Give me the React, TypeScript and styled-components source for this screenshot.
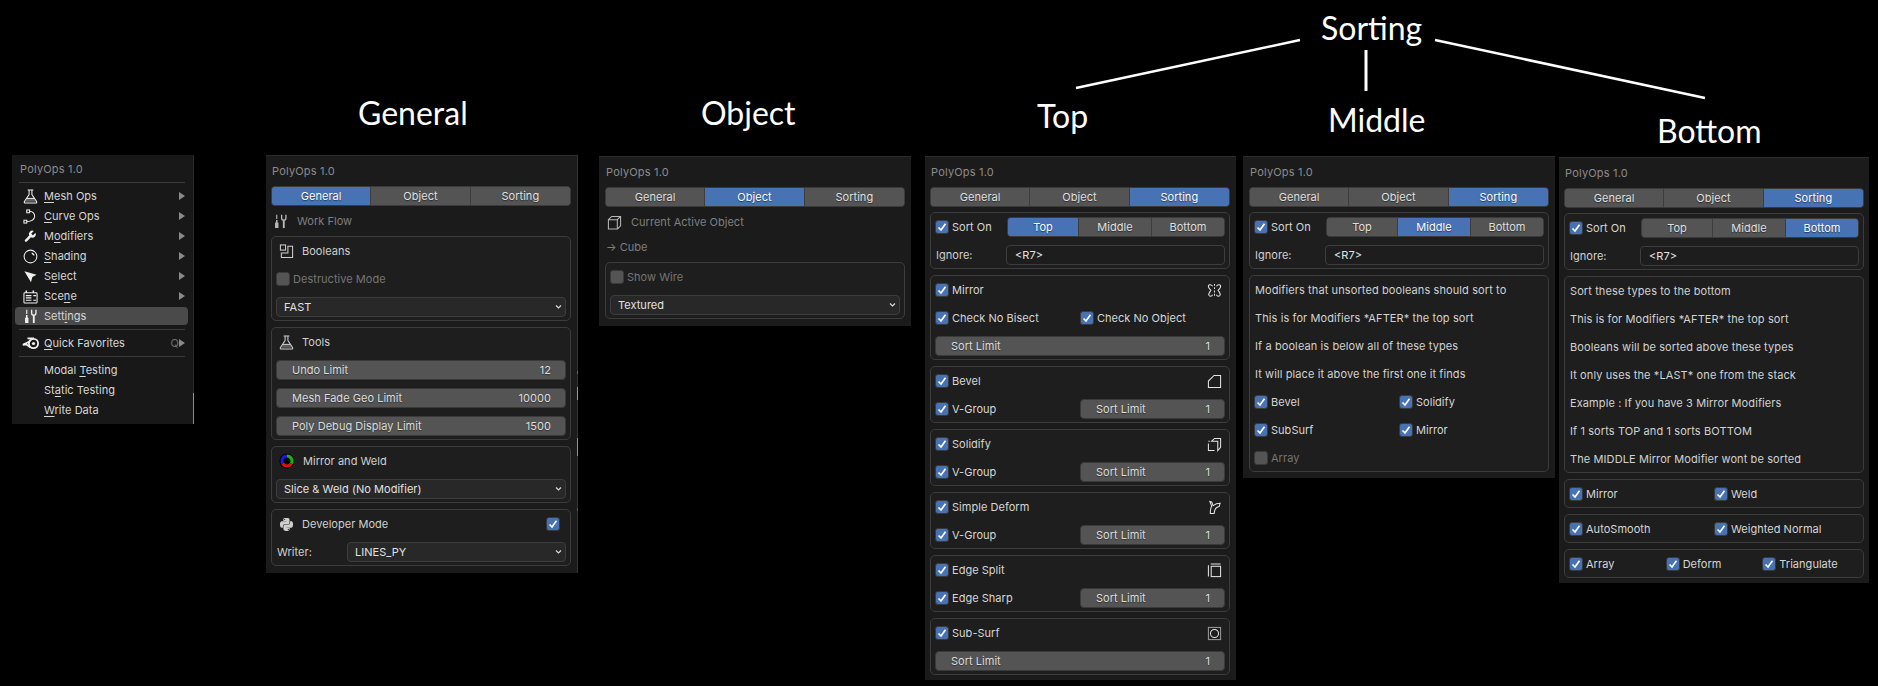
import React from "react";
import styled, { createGlobalStyle } from "styled-components";
import { FaPython } from "react-icons/fa";

const Global = createGlobalStyle`
  html, body { margin: 0; padding: 0; background: #000; overflow: hidden; }
  * { box-sizing: border-box; }
`;

const Canvas = styled.div`
  position: relative;
  width: 1878px;
  height: 686px;
  overflow: hidden;
  background: #000;
  font-family: Inter, "Liberation Sans", sans-serif;
  font-size: 11px;
  letter-spacing: 0.03px;
  color: #d6d6d6;
`;

const Heading = styled.div<{ $x: number; $y: number }>`
  position: absolute;
  left: ${(p) => p.$x}px;
  top: ${(p) => p.$y}px;
  transform: translateY(-50%);
  font-family: Lato, "Open Sans", sans-serif;
  font-size: 32px;
  line-height: 40px;
  letter-spacing: 0;
  color: #fff;
  white-space: nowrap;
`;

const Lines = styled.svg`
  position: absolute;
  left: 0;
  top: 0;
`;

const Win = styled.div<{ $x: number; $y: number; $w: number; $h: number; $pad: number }>`
  position: absolute;
  left: ${(p) => p.$x}px;
  top: ${(p) => p.$y}px;
  width: ${(p) => p.$w}px;
  height: ${(p) => p.$h}px;
  padding-left: ${(p) => p.$pad}px;
  background: #1b1b1b;
  border-top: 1px solid #2b2b2b;
`;

const EdgeMark = styled.div<{ $x: number; $y: number; $h: number; $c: string }>`
  position: absolute;
  left: ${(p) => p.$x}px;
  top: ${(p) => p.$y}px;
  width: 1px;
  height: ${(p) => p.$h}px;
  background: ${(p) => p.$c};
`;

const Title = styled.div`
  height: 30px;
  display: flex;
  align-items: center;
  padding-left: 1px;
  color: #8b8b8b;
  letter-spacing: 0.2px;
`;

const Content = styled.div`
  width: 300px;
`;

const Seg = styled.div<{ $cols: string }>`
  display: grid;
  grid-template-columns: ${(p) => p.$cols};
  height: 20px;
  border-radius: 4px;
  border: 1px solid #3a3a3a;
  overflow: hidden;
  background: #545454;
`;

const SegItem = styled.div<{ $on?: boolean }>`
  display: flex;
  align-items: center;
  justify-content: center;
  background: ${(p) => (p.$on ? "#4772b3" : "#545454")};
  color: ${(p) => (p.$on ? "#fff" : "#e0e0e0")};
  text-shadow: 0 1px 1px rgba(0, 0, 0, 0.5);
  border-right: 1px solid #3d3d3d;
  &:last-child { border-right: none; }
`;

const Stack = styled.div<{ $flush?: boolean }>`
  display: flex;
  flex-direction: column;
  gap: 6px;
  margin-top: ${(p) => (p.$flush ? 0 : 5)}px;
`;

const Note = styled.div`
  display: flex;
  align-items: center;
  gap: 9px;
  height: 20px;
  margin-bottom: 5px;
  padding-left: 2px;
  color: #7f7f7f;
  svg { color: #b8b8b8; }
`;

const PlainNote = styled(Note)`
  padding-left: 1px;
  gap: 5px;
`;

const Body = styled.div`
  margin-top: 5px;
`;

const Box = styled.div`
  display: flex;
  flex-direction: column;
  gap: 8px;
  padding: 4px 4px 3px;
  border: 1px solid #3c3c3c;
  border-radius: 5px;
  background: #1e1e1e;
`;

const Row = styled.div<{ $cols?: string }>`
  display: grid;
  grid-template-columns: ${(p) => p.$cols || "1fr"};
  align-items: center;
  height: 20px;
`;

const HeadRow = styled.div`
  display: flex;
  align-items: center;
  justify-content: space-between;
  height: 20px;
`;

const IconTitle = styled.div`
  display: flex;
  align-items: center;
  gap: 8px;
  padding-left: 3px;
  color: #d0d0d0;
`;

const RightIcon = styled.span`
  display: flex;
  margin-right: 3px;
  color: #e4e4e4;
`;

const CheckWrap = styled.div<{ $off?: boolean }>`
  display: flex;
  align-items: center;
  gap: 3px;
  height: 20px;
  color: ${(p) => (p.$off ? "#757575" : "#d6d6d6")};
`;

const CheckBox = styled.span<{ $on?: boolean }>`
  display: flex;
  align-items: center;
  justify-content: center;
  width: 14px;
  height: 14px;
  border-radius: 3px;
  border: 1px solid #3a3a3a;
  background: ${(p) => (p.$on ? "#4772b3" : "#545454")};
`;

const EndCheck = styled.span`
  margin-right: 6px;
`;

const Field = styled.div`
  display: flex;
  align-items: center;
  justify-content: space-between;
  height: 20px;
  padding: 0 14px 0 15px;
  border: 1px solid #3a3a3a;
  border-radius: 4px;
  background: #545454;
  color: #dcdcdc;
  text-shadow: 0 1px 1px rgba(0, 0, 0, 0.4);
`;

const Select = styled.div`
  display: flex;
  align-items: center;
  justify-content: space-between;
  height: 20px;
  padding: 0 2px 0 7px;
  border: 1px solid #3d3d3d;
  border-radius: 4px;
  background: #282828;
  color: #e2e2e2;
`;

const TextInput = styled(Select)`
  padding-left: 8px;
  background: #1d1d1d;
`;

const Text = styled.div`
  height: 20px;
  display: flex;
  align-items: center;
  padding-left: 1px;
  color: #d2d2d2;
  letter-spacing: 0.1px;
  white-space: nowrap;
`;

const Lbl = styled.span`
  padding-left: 1px;
  color: #d0d0d0;
`;

const MenuWin = styled(Win)`
  background: #181818;
  border-top: none;
`;

const MenuTitle = styled.div`
  height: 23px;
  padding-top: 5px;
  display: flex;
  align-items: center;
  padding-left: 8px;
  color: #8b8b8b;
  letter-spacing: 0.2px;
`;

const Sep = styled.div`
  height: 1px;
  margin: 4px 8px 4px 7px;
  background: #3a3a3a;
`;

const MenuGroup = styled.div`
  display: flex;
  flex-direction: column;
  gap: 2px;
`;

const MenuItem = styled.div<{ $on?: boolean }>`
  display: flex;
  align-items: center;
  height: 18px;
  margin: 0 5px 0 3px;
  padding: 0 3px 0 8px;
  border-radius: 4px;
  background: ${(p) => (p.$on ? "#4a4a4a" : "transparent")};
  color: #d6d6d6;
`;

const MenuIcon = styled.span`
  display: flex;
  width: 14px;
  margin-right: 7px;
  color: #f0f0f0;
`;

const LogoIcon = styled(MenuIcon)`
  margin-left: -1px;
  margin-right: 8px;
`;

const MenuLabel = styled.span`
  flex: 1;
  u { text-underline-offset: 2px; text-decoration-thickness: 1px; }
`;

const Shortcut = styled.span`
  color: #6e6e6e;
`;

const Arrow = () => (
  <svg width="6" height="8" viewBox="0 0 6 8"><path d="M0 0l6 4-6 4z" fill="#8a8a8a" /></svg>
);

const Chevron = () => (
  <svg width="9" height="6" viewBox="0 0 9 6"><path d="M2 1.500L4.500 4L7 1.500" fill="none" stroke="#d8d8d8" strokeWidth="1.200" /></svg>
);

const Tick = () => (
  <svg width="10" height="10" viewBox="0 0 10 10"><path d="M1.500 5.500L4 8L8.500 1.800" fill="none" stroke="#fff" strokeWidth="1.700" /></svg>
);

const I = ({ children, size = 15 }: { children: React.ReactNode; size?: number }) => (
  <svg width={size} height={size} viewBox="0 0 16 16" fill="none" stroke="currentColor" strokeWidth="1.100" style={{ flex: "none" }}>
    {children}
  </svg>
);

const Flask = () => (
  <I>
    <path d="M5 1h6M6.500 1V6L1.500 13.300c-.5 1 0 1.700 1 1.700h11c1 0 1.500-.7 1-1.700L9.500 6V1" />
    <path d="M4.200 10h7.600l2.200 3.700H2z" fill="currentColor" fillOpacity="0.35" stroke="none" />
    <path d="M4 10h8" />
  </I>
);
const Curve = () => (
  <I>
    <rect x="4" y="1" width="3" height="3" />
    <rect x="1" y="12" width="3" height="3" />
    <path d="M7 2.500C14 2.500 15.500 13 4 13.500" />
  </I>
);
const Wrench = () => (
  <svg width="15" height="15" viewBox="0 0 24 24" fill="currentColor">
    <path d="M14.700 6.300a1 1 0 0 0 0 1.400l1.600 1.600a1 1 0 0 0 1.400 0l3.770-3.770a6 6 0 0 1-7.940 7.940l-6.910 6.910a2.120 2.120 0 0 1-3-3l6.910-6.910a6 6 0 0 1 7.940-7.940l-3.760 3.760z" />
  </svg>
);
const Shade = () => (
  <I>
    <circle cx="8" cy="8" r="6.800" />
    <path d="M9 3.600c1.800.2 3.200 1.600 3.400 3.400-1.600 0-3.200-1.600-3.400-3.400z" fill="currentColor" stroke="none" />
  </I>
);
const Cursor = () => (
  <I>
    <path d="M1.500 2.500L14.500 6 10 8.600 8.500 14z" fill="currentColor" stroke="none" />
  </I>
);
const Scene = () => (
  <I>
    <path d="M3.500 4V1.500M11 4V1.500" strokeWidth="1.600" />
    <rect x="1" y="4" width="14" height="11" rx="1" />
    <path d="M3 7h6M3 9.500h6M3 12h6M11 7h3M11 12h3" strokeWidth="1.200" />
  </I>
);
const Tools = () => (
  <I>
    <path d="M4 .8v4.400" strokeWidth="1.200" />
    <path d="M3.200 6.500h1.600v2.200l1 1V15H2.200V9.700l1-1z" fill="currentColor" stroke="none" />
    <path d="M9.200 .8v3.400c0 1.500 1.200 2.400 2.300 2.400s2.300-.9 2.300-2.400V.8" strokeWidth="1.400" />
    <path d="M11.500 6.500V15" strokeWidth="2" />
  </I>
);
const BlenderLogo = () => (
  <svg width="18" height="14" viewBox="0 0 18 14" fill="none" stroke="currentColor" style={{ flex: "none" }}>
    <circle cx="11.500" cy="7.500" r="4.600" strokeWidth="1.800" />
    <circle cx="11.500" cy="7.500" r="1.600" fill="currentColor" stroke="none" />
    <path d="M12 2.300H5.500M8 5.300L.8 8.800M.8 8.800L5 8.500M8.500 11.500L4.500 8.500" strokeWidth="1.700" />
  </svg>
);
const Bool = () => (
  <I>
    <rect x="1.500" y="1" width="5.500" height="5.500" />
    <path d="M9.500 2.500h5v12h-12V9.500h7z" />
  </I>
);
const ColorRing = () => (
  <svg width="16" height="16" viewBox="0 0 16 16" fill="none" strokeWidth="3" style={{ flex: "none" }}>
    <circle cx="8" cy="8" r="7.600" fill="#000" stroke="none" />
    <path d="M3.670 10.500A5 5 0 0 1 8 3" stroke="#1a1ae0" />
    <path d="M8 3A5 5 0 0 1 12.330 10.500" stroke="#12b812" />
    <path d="M12.330 10.500A5 5 0 0 1 3.670 10.500" stroke="#e01010" />
  </svg>
);
const Cube = () => (
  <I>
    <path d="M1.500 5h9.500v10H1.500zM1.500 5L5 1.500h9.500V11.500L11 15M11 5l3.500-3.500" />
  </I>
);
const Butterfly = () => (
  <I>
    <path d="M8 1v14" strokeDasharray="2 1.500" />
    <path d="M6 3.500C4.500 1.500 2 1.500 1.500 3c-.4 1.800 1.200 3.400 2.700 4.800C2.800 9.300 1.400 11 2 13c.6 1.600 3 1.600 4-.5" />
    <path d="M10 3.500c1.500-2 4-2 4.500-.5.400 1.800-1.200 3.400-2.700 4.800 1.400 1.500 2.800 3.200 2.200 5.200-.6 1.600-3 1.600-4-.5" />
  </I>
);
const Bevel = () => (
  <I>
    <path d="M1.500 14.500V7.500L7.500 1.500h7v13z" />
  </I>
);
const Solidify = () => (
  <I>
    <path d="M5 4.500L8 1.500h6.500V11L11.500 14.500V4.500z" />
    <path d="M1.500 7v7.500H8M1.500 4.500H3" />
  </I>
);
const Deform = () => (
  <I>
    <path d="M3 1.500l2 .5 1.500 4C8.500 4.500 11 3.500 14 3.500L13 7C9.500 7.500 7.800 10 7.500 14.500H3.500C3.500 11 4 8.500 5 6.500z" />
  </I>
);
const EdgeSplit = () => (
  <I>
    <path d="M1.500 2.500v12M4 1h10.500" />
    <rect x="4.500" y="3.500" width="10" height="11" />
  </I>
);
const SubSurf = () => (
  <I>
    <rect x="1.500" y="1.500" width="13" height="13" stroke="#9a9a9a" />
    <circle cx="8" cy="8" r="4.300" />
  </I>
);

const Check = ({ label, off }: { label: string; off?: boolean }) => (
  <CheckWrap $off={off}>
    <CheckBox $on={!off}>{!off && <Tick />}</CheckBox>
    <span>{label}</span>
  </CheckWrap>
);

const Tabs = ({ items, on, cols = "repeat(3, 1fr)" }: { items: string[]; on: number; cols?: string }) => (
  <Seg $cols={cols}>
    {items.map((t, i) => (
      <SegItem key={t} $on={i === on}>{t}</SegItem>
    ))}
  </Seg>
);

const MainTabs = ({ on }: { on: number }) => <Tabs items={["General", "Object", "Sorting"]} on={on} />;

const SortHead = ({ on }: { on: number }) => (
  <Box>
    <Row $cols="72px 1fr">
      <Check label="Sort On" />
      <Tabs items={["Top", "Middle", "Bottom"]} on={on} cols="71px 73px 1fr" />
    </Row>
    <Row $cols="71px 1fr">
      <Lbl>Ignore:</Lbl>
      <TextInput>&lt;R7&gt;</TextInput>
    </Row>
  </Box>
);

const SortField = () => (
  <Field>
    <span>Sort Limit</span>
    <span>1</span>
  </Field>
);

const ModBox = ({ name, sub, icon }: { name: string; sub: string; icon: React.ReactNode }) => (
  <Box>
    <HeadRow>
      <Check label={name} />
      <RightIcon>{icon}</RightIcon>
    </HeadRow>
    <Row $cols="1fr 1fr">
      <Check label={sub} />
      <SortField />
    </Row>
  </Box>
);

const menuTop: [React.ReactNode, React.ReactNode][] = [
  [<Flask />, <><u>M</u>esh Ops</>],
  [<Curve />, <><u>C</u>urve Ops</>],
  [<Wrench />, <>M<u>o</u>difiers</>],
  [<Shade />, <><u>S</u>hading</>],
  [<Cursor />, <>S<u>e</u>lect</>],
  [<Scene />, <>Sce<u>n</u>e</>],
];

const Menu = () => (
  <MenuWin $x={12} $y={155} $w={181} $h={269} $pad={0}>
    <MenuTitle>PolyOps 1.0</MenuTitle>
    <Sep />
    <MenuGroup>
      {menuTop.map(([icon, label], i) => (
        <MenuItem key={i}>
          <MenuIcon>{icon}</MenuIcon>
          <MenuLabel>{label}</MenuLabel>
          <Arrow />
        </MenuItem>
      ))}
      <MenuItem $on>
        <MenuIcon><Tools /></MenuIcon>
        <MenuLabel>Sett<u>i</u>ngs</MenuLabel>
      </MenuItem>
    </MenuGroup>
    <Sep />
    <MenuItem>
      <LogoIcon><BlenderLogo /></LogoIcon>
      <MenuLabel><u>Q</u>uick Favorites</MenuLabel>
      <Shortcut>Q</Shortcut>
      <Arrow />
    </MenuItem>
    <Sep />
    <MenuGroup>
      <MenuItem><MenuIcon /><MenuLabel>Modal <u>T</u>esting</MenuLabel></MenuItem>
      <MenuItem><MenuIcon /><MenuLabel>St<u>a</u>tic Testing</MenuLabel></MenuItem>
      <MenuItem><MenuIcon /><MenuLabel><u>W</u>rite Data</MenuLabel></MenuItem>
    </MenuGroup>
  </MenuWin>
);

const GeneralPanel = () => (
  <Win $x={266} $y={155} $w={312} $h={418} $pad={5}>
    <Title>PolyOps 1.0</Title>
    <Content>
      <MainTabs on={0} />
      <Body>
        <Note><Tools /><span>Work Flow</span></Note>
        <Stack $flush>
          <Box>
            <HeadRow><IconTitle><Bool />Booleans</IconTitle></HeadRow>
            <Check label="Destructive Mode" off />
            <Select>FAST<Chevron /></Select>
          </Box>
          <Box>
            <HeadRow><IconTitle><Flask />Tools</IconTitle></HeadRow>
            <Field><span>Undo Limit</span><span>12</span></Field>
            <Field><span>Mesh Fade Geo Limit</span><span>10000</span></Field>
            <Field><span>Poly Debug Display Limit</span><span>1500</span></Field>
          </Box>
          <Box>
            <HeadRow><IconTitle><ColorRing />Mirror and Weld</IconTitle></HeadRow>
            <Select>Slice &amp; Weld (No Modifier)<Chevron /></Select>
          </Box>
          <Box>
            <HeadRow>
              <IconTitle><FaPython size={15} />Developer Mode</IconTitle>
              <EndCheck><CheckBox $on><Tick /></CheckBox></EndCheck>
            </HeadRow>
            <Row $cols="71px 1fr">
              <Lbl>Writer:</Lbl>
              <Select>LINES_PY<Chevron /></Select>
            </Row>
          </Box>
        </Stack>
      </Body>
    </Content>
  </Win>
);

const ObjectPanel = () => (
  <Win $x={599} $y={156} $w={312} $h={170} $pad={6}>
    <Title>PolyOps 1.0</Title>
    <Content>
      <MainTabs on={1} />
      <Body>
        <Note><Cube /><span>Current Active Object</span></Note>
        <PlainNote><span>→ Cube</span></PlainNote>
        <Box>
          <Check label="Show Wire" off />
          <Select>Textured<Chevron /></Select>
        </Box>
      </Body>
    </Content>
  </Win>
);

const TopPanel = () => (
  <Win $x={925} $y={156} $w={311} $h={524} $pad={5}>
    <Title>PolyOps 1.0</Title>
    <Content>
      <MainTabs on={2} />
      <Stack>
        <SortHead on={0} />
        <Box>
          <HeadRow>
            <Check label="Mirror" />
            <RightIcon><Butterfly /></RightIcon>
          </HeadRow>
          <Row $cols="1fr 1fr">
            <Check label="Check No Bisect" />
            <Check label="Check No Object" />
          </Row>
          <SortField />
        </Box>
        <ModBox name="Bevel" sub="V-Group" icon={<Bevel />} />
        <ModBox name="Solidify" sub="V-Group" icon={<Solidify />} />
        <ModBox name="Simple Deform" sub="V-Group" icon={<Deform />} />
        <ModBox name="Edge Split" sub="Edge Sharp" icon={<EdgeSplit />} />
        <Box>
          <HeadRow>
            <Check label="Sub-Surf" />
            <RightIcon><SubSurf /></RightIcon>
          </HeadRow>
          <SortField />
        </Box>
      </Stack>
    </Content>
  </Win>
);

const MiddlePanel = () => (
  <Win $x={1243} $y={156} $w={312} $h={322} $pad={6}>
    <Title>PolyOps 1.0</Title>
    <Content>
      <MainTabs on={2} />
      <Stack>
        <SortHead on={1} />
        <Box>
          <Text>Modifiers that unsorted booleans should sort to</Text>
          <Text>This is for Modifiers *AFTER* the top sort</Text>
          <Text>If a boolean is below all of these types</Text>
          <Text>It will place it above the first one it finds</Text>
          <Row $cols="1fr 1fr"><Check label="Bevel" /><Check label="Solidify" /></Row>
          <Row $cols="1fr 1fr"><Check label="SubSurf" /><Check label="Mirror" /></Row>
          <Check label="Array" off />
        </Box>
      </Stack>
    </Content>
  </Win>
);

const BottomPanel = () => (
  <Win $x={1559} $y={157} $w={310} $h={426} $pad={5}>
    <Title>PolyOps 1.0</Title>
    <Content>
      <MainTabs on={2} />
      <Stack>
        <SortHead on={2} />
        <Box>
          <Text>Sort these types to the bottom</Text>
          <Text>This is for Modifiers *AFTER* the top sort</Text>
          <Text>Booleans will be sorted above these types</Text>
          <Text>It only uses the *LAST* one from the stack</Text>
          <Text>Example : If you have 3 Mirror Modifiers</Text>
          <Text>If 1 sorts TOP and 1 sorts BOTTOM</Text>
          <Text>The MIDDLE Mirror Modifier wont be sorted</Text>
        </Box>
        <Box>
          <Row $cols="1fr 1fr"><Check label="Mirror" /><Check label="Weld" /></Row>
        </Box>
        <Box>
          <Row $cols="1fr 1fr"><Check label="AutoSmooth" /><Check label="Weighted Normal" /></Row>
        </Box>
        <Box>
          <Row $cols="1fr 1fr 1fr"><Check label="Array" /><Check label="Deform" /><Check label="Triangulate" /></Row>
        </Box>
      </Stack>
    </Content>
  </Win>
);

export default function App() {
  return (
    <Canvas>
      <Global />
      <Heading $x={358} $y={113}>General</Heading>
      <Heading $x={701} $y={113}>Object</Heading>
      <Heading $x={1321} $y={28}>Sorting</Heading>
      <Heading $x={1037} $y={116}>Top</Heading>
      <Heading $x={1328} $y={120}>Middle</Heading>
      <Heading $x={1657} $y={131}>Bottom</Heading>
      <Lines width="1878" height="686" viewBox="0 0 1878 686">
        <path d="M1076 88L1300 40M1435 40L1705 98" stroke="#fff" strokeWidth="2.500" fill="none" />
        <path d="M1366 50V91" stroke="#fff" strokeWidth="3" fill="none" />
      </Lines>
      <Menu />
      <EdgeMark $x={193} $y={155} $h={238} $c="#2a2a2a" />
      <EdgeMark $x={193} $y={393} $h={7} $c="#c98a3a" />
      <EdgeMark $x={193} $y={400} $h={24} $c="#8a8a8a" />
      <GeneralPanel />
      <EdgeMark $x={577} $y={155} $h={418} $c="#333333" />
      <EdgeMark $x={577} $y={371} $h={3} $c="#4a7a2a" />
      <EdgeMark $x={577} $y={387} $h={5} $c="#d98a2a" />
      <EdgeMark $x={577} $y={392} $h={8} $c="#9a9a9a" />
      <EdgeMark $x={577} $y={438} $h={18} $c="#d9801a" />
      <EdgeMark $x={577} $y={508} $h={3} $c="#b03030" />
      <ObjectPanel />
      <TopPanel />
      <MiddlePanel />
      <BottomPanel />
    </Canvas>
  );
}
